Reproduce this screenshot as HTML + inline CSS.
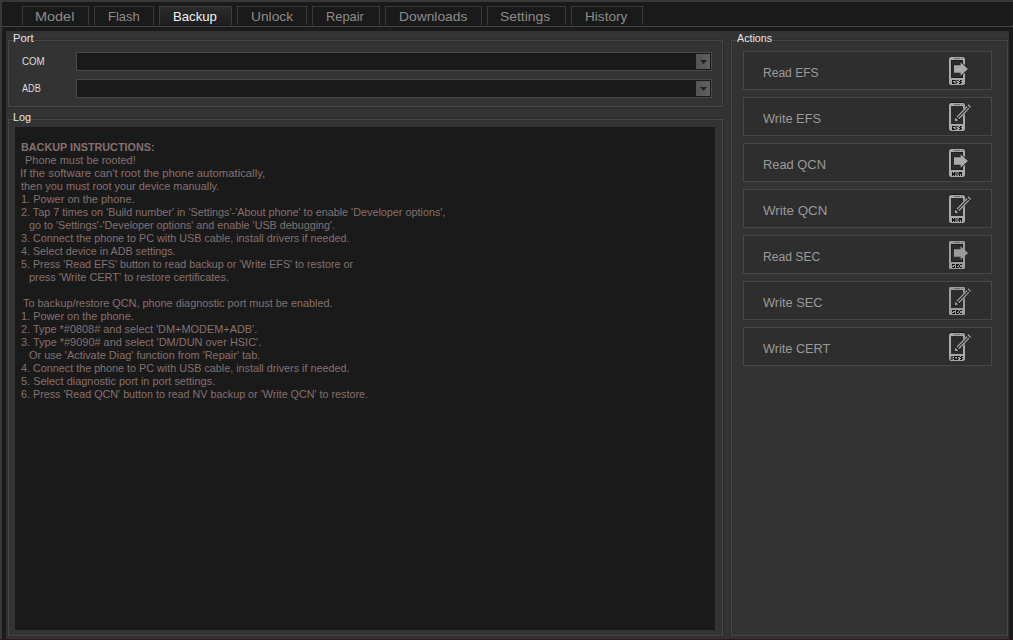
<!DOCTYPE html>
<html><head><meta charset="utf-8">
<style>
*{margin:0;padding:0;box-sizing:border-box}
html,body{width:1013px;height:640px;overflow:hidden;background:#1a1a1a;font-family:"Liberation Sans",sans-serif}
.a{position:absolute}
.tx{position:absolute;white-space:pre;transform-origin:0 0}
.tab{position:absolute;top:6px;height:19px;border:1px solid #3a3a3a;border-bottom:none}
.tab.sel{background:linear-gradient(#2b2b2b,#1d1d1d);border-color:#3e3e3e}
.tt{font-size:13px;line-height:15px;color:#8c8c8c}
.tt.sel{color:#f2f2f2}
.grp{position:absolute;border:1px solid #464646;box-shadow:0 0 0 1px #2e2e2e}
.gt{font-size:11px;line-height:13px;color:#e6e6e6}
.knock{position:absolute;background:#333333;height:3px}
.lbl{font-size:11px;line-height:13px;color:#dcdcdc}
.combo{position:absolute;left:76px;width:636px;height:19px;border:1px solid #4a4a4a;background:#1a1a1a}
.combo .in{position:absolute;left:0;top:0;right:0;bottom:0;border:1px solid #1a1a1a}
.combo .btn{position:absolute;left:619px;top:1px;width:14px;height:15px;background:linear-gradient(90deg,#545454,#606060)}
.combo svg{position:absolute;left:0;top:0}
.ll{font-size:11px;line-height:13px;color:#857070}
.ll.b{font-weight:bold}
.ab{position:absolute;left:743px;width:249px;height:39px;border:1px solid #474747;background:#2e2e2e}
.abt{font-size:12px;line-height:14px;color:#9a9a9a}
.ab svg{position:absolute;left:205px;top:4px}
</style></head><body>
<div class="a" style="left:0;top:0;width:1013px;height:2px;background:#383838"></div>
<div class="a" style="left:0;top:0;width:2px;height:640px;background:#383838"></div>
<div class="tab" style="left:22px;width:67px"></div>
<div class="tab" style="left:94px;width:60px"></div>
<div class="tab sel" style="left:159px;width:73px"></div>
<div class="tab" style="left:237px;width:70px"></div>
<div class="tab" style="left:312px;width:68px"></div>
<div class="tab" style="left:385px;width:97px"></div>
<div class="tab" style="left:487px;width:79px"></div>
<div class="tab" style="left:571px;width:72px"></div>
<div class="tx tt" style="left:35.30px;top:9.00px;transform:scaleX(1.1114);">Model</div>
<div class="tx tt" style="left:107.61px;top:9.00px;transform:scaleX(0.9948);">Flash</div>
<div class="tx tt sel" style="left:173.49px;top:9.00px;transform:scaleX(1.0135);">Backup</div>
<div class="tx tt" style="left:251.44px;top:9.00px;transform:scaleX(1.0577);">Unlock</div>
<div class="tx tt" style="left:325.51px;top:9.00px;transform:scaleX(0.9877);">Repair</div>
<div class="tx tt" style="left:398.63px;top:9.00px;transform:scaleX(1.0629);">Downloads</div>
<div class="tx tt" style="left:500.06px;top:9.00px;transform:scaleX(1.0661);">Settings</div>
<div class="tx tt" style="left:584.55px;top:9.00px;transform:scaleX(1.0464);">History</div>
<div class="a" style="left:2px;top:26px;width:1011px;height:1px;background:#444444"></div>
<div class="a" style="left:6px;top:31px;width:1003px;height:608px;background:#333333"></div>
<div class="grp" style="left:8px;top:40px;width:715px;height:67px"></div>
<div class="grp" style="left:8px;top:119px;width:715px;height:517px"></div>
<div class="grp" style="left:731px;top:40px;width:277px;height:596px"></div>
<div class="knock" style="left:14px;top:39px;width:20px"></div>
<div class="knock" style="left:14px;top:118px;width:17px"></div>
<div class="knock" style="left:737px;top:39px;width:35px"></div>
<div class="tx gt" style="left:12.70px;top:31.69px;transform:scaleX(1.0169);">Port</div>
<div class="tx gt" style="left:12.60px;top:110.69px;transform:scaleX(0.9856);">Log</div>
<div class="tx gt" style="left:736.90px;top:31.69px;transform:scaleX(0.9747);">Actions</div>
<div class="tx lbl" style="left:21.85px;top:54.69px;transform:scaleX(0.8824);">COM</div>
<div class="tx lbl" style="left:21.86px;top:81.69px;transform:scaleX(0.8313);">ADB</div>
<div class="combo" style="top:52px"><div class="in"></div><div class="btn"><svg width="14" height="15"><polygon points="4,6 11,6 7.5,10" fill="#222"/></svg></div></div>
<div class="combo" style="top:79px"><div class="in"></div><div class="btn"><svg width="14" height="15"><polygon points="4,6 11,6 7.5,10" fill="#222"/></svg></div></div>
<div class="a" style="left:15px;top:127px;width:700px;height:503px;background:#1a1a1a"></div>
<div class="tx ll b" style="left:21.49px;top:140.69px;transform:scaleX(0.9809);">BACKUP INSTRUCTIONS:</div>
<div class="tx ll" style="left:25.18px;top:153.69px;transform:scaleX(0.9947);">Phone must be rooted!</div>
<div class="tx ll" style="left:19.97px;top:166.69px;transform:scaleX(1.0275);">If the software can't root the phone automatically,</div>
<div class="tx ll" style="left:20.50px;top:179.69px;transform:scaleX(0.9926);">then you must root your device manually.</div>
<div class="tx ll" style="left:21.49px;top:192.69px;transform:scaleX(0.9985);">1. Power on the phone.</div>
<div class="tx ll" style="left:20.50px;top:205.69px;transform:scaleX(0.9828);">2. Tap 7 times on 'Build number' in 'Settings'-'About phone' to enable 'Developer options',</div>
<div class="tx ll" style="left:28.70px;top:218.69px;transform:scaleX(0.9783);">go to 'Settings'-'Developer options' and enable 'USB debugging'.</div>
<div class="tx ll" style="left:20.50px;top:231.69px;transform:scaleX(0.9803);">3. Connect the phone to PC with USB cable, install drivers if needed.</div>
<div class="tx ll" style="left:20.50px;top:244.69px;transform:scaleX(0.9761);">4. Select device in ADB settings.</div>
<div class="tx ll" style="left:20.50px;top:257.69px;transform:scaleX(0.9759);">5. Press 'Read EFS' button to read backup or 'Write EFS' to restore or</div>
<div class="tx ll" style="left:28.69px;top:270.69px;transform:scaleX(0.9968);">press 'Write CERT' to restore certificates.</div>
<div class="tx ll" style="left:23.40px;top:296.69px;transform:scaleX(0.9869);">To backup/restore QCN, phone diagnostic port must be enabled.</div>
<div class="tx ll" style="left:21.49px;top:309.69px;transform:scaleX(0.9915);">1. Power on the phone.</div>
<div class="tx ll" style="left:20.50px;top:322.69px;transform:scaleX(0.9916);">2. Type *#0808# and select 'DM+MODEM+ADB'.</div>
<div class="tx ll" style="left:21.49px;top:335.69px;transform:scaleX(0.9957);">3. Type *#9090# and select 'DM/DUN over HSIC'.</div>
<div class="tx ll" style="left:29.40px;top:348.69px;transform:scaleX(0.9935);">Or use 'Activate Diag' function from 'Repair' tab.</div>
<div class="tx ll" style="left:20.50px;top:361.69px;transform:scaleX(0.9802);">4. Connect the phone to PC with USB cable, install drivers if needed.</div>
<div class="tx ll" style="left:21.49px;top:374.69px;transform:scaleX(0.9955);">5. Select diagnostic port in port settings.</div>
<div class="tx ll" style="left:20.50px;top:387.69px;transform:scaleX(0.9778);">6. Press 'Read QCN' button to read NV backup or 'Write QCN' to restore.</div>
<div class="ab" style="top:51px"><svg width="26" height="32" viewBox="0 -1 26 32" style="overflow:visible"><rect x="0" y="0" width="16" height="28" rx="2.5" fill="#a9a9a9"/><rect x="2" y="3" width="12" height="18" fill="#1e1e1e"/><rect x="3" y="4" width="10" height="16" fill="#2c2c2c"/><rect x="5" y="1" width="6" height="1" fill="#6a6a6a"/><rect x="12" y="1" width="2" height="1" fill="#7a7a7a"/><g fill="#151515" shape-rendering="auto"><rect x="3" y="23" width="1" height="1"/><rect x="4" y="23" width="1" height="1"/><rect x="5" y="23" width="1" height="1"/><rect x="3" y="24" width="1" height="1"/><rect x="3" y="25" width="1" height="1"/><rect x="4" y="25" width="1" height="1"/><rect x="3" y="26" width="1" height="1"/><rect x="4" y="26" width="1" height="1"/><rect x="5" y="26" width="1" height="1"/><rect x="6.5" y="23" width="1" height="1"/><rect x="7.5" y="23" width="1" height="1"/><rect x="8.5" y="23" width="1" height="1"/><rect x="6.5" y="24" width="1" height="1"/><rect x="6.5" y="25" width="1" height="1"/><rect x="7.5" y="25" width="1" height="1"/><rect x="6.5" y="26" width="1" height="1"/><rect x="11" y="23" width="1" height="1"/><rect x="12" y="23" width="1" height="1"/><rect x="10" y="24" width="1" height="1"/><rect x="11" y="24" width="1" height="1"/><rect x="11" y="25" width="1" height="1"/><rect x="12" y="25" width="1" height="1"/><rect x="10" y="26" width="1" height="1"/><rect x="11" y="26" width="1" height="1"/></g><polygon points="5,8.2 11.6,8.2 11.6,5.2 19,12 11.6,18.8 11.6,15.8 5,15.8" fill="#a9a9a9" stroke="#202020" stroke-width="1.4" paint-order="stroke" stroke-linejoin="miter"/></svg></div>
<div class="ab" style="top:97px"><svg width="26" height="32" viewBox="0 -1 26 32" style="overflow:visible"><rect x="1" y="-1" width="14" height="1" fill="#151515"/><rect x="0" y="0" width="16" height="28" rx="2.5" fill="#a9a9a9"/><rect x="2" y="3" width="12" height="18" fill="#2c2c2c"/><rect x="5" y="1" width="6" height="1" fill="#6a6a6a"/><rect x="12" y="1" width="2" height="1" fill="#7a7a7a"/><g fill="#151515" shape-rendering="auto"><rect x="3" y="23" width="1" height="1"/><rect x="4" y="23" width="1" height="1"/><rect x="5" y="23" width="1" height="1"/><rect x="3" y="24" width="1" height="1"/><rect x="3" y="25" width="1" height="1"/><rect x="4" y="25" width="1" height="1"/><rect x="3" y="26" width="1" height="1"/><rect x="4" y="26" width="1" height="1"/><rect x="5" y="26" width="1" height="1"/><rect x="6.5" y="23" width="1" height="1"/><rect x="7.5" y="23" width="1" height="1"/><rect x="8.5" y="23" width="1" height="1"/><rect x="6.5" y="24" width="1" height="1"/><rect x="6.5" y="25" width="1" height="1"/><rect x="7.5" y="25" width="1" height="1"/><rect x="6.5" y="26" width="1" height="1"/><rect x="11" y="23" width="1" height="1"/><rect x="12" y="23" width="1" height="1"/><rect x="10" y="24" width="1" height="1"/><rect x="11" y="24" width="1" height="1"/><rect x="11" y="25" width="1" height="1"/><rect x="12" y="25" width="1" height="1"/><rect x="10" y="26" width="1" height="1"/><rect x="11" y="26" width="1" height="1"/></g><g transform="translate(5.5,18.4) rotate(-46)"><rect x="3.2" y="-2.4" width="18.8" height="4.8" fill="#222" opacity="0.6"/><polygon points="0,0 3.6,-1.9 3.6,1.9" fill="#a9a9a9"/><rect x="-0.3" y="-0.6" width="1.2" height="1.2" fill="#151515"/><rect x="3.6" y="-2.3" width="1.2" height="4.6" fill="#121212"/><rect x="4.8" y="-1.9" width="14.8" height="3.8" fill="#a9a9a9"/><rect x="4.8" y="-0.55" width="14.8" height="1.1" fill="#202020"/><rect x="19.6" y="-2.1" width="1" height="4.2" fill="#161616"/><rect x="20.6" y="-1.9" width="1.3" height="3.8" fill="#a9a9a9"/></g></svg></div>
<div class="ab" style="top:143px"><svg width="26" height="32" viewBox="0 -1 26 32" style="overflow:visible"><rect x="0" y="0" width="16" height="28" rx="2.5" fill="#a9a9a9"/><rect x="2" y="3" width="12" height="18" fill="#1e1e1e"/><rect x="3" y="4" width="10" height="16" fill="#2c2c2c"/><rect x="5" y="1" width="6" height="1" fill="#6a6a6a"/><rect x="12" y="1" width="2" height="1" fill="#7a7a7a"/><g fill="#151515" shape-rendering="auto"><rect x="3" y="23" width="1" height="1"/><rect x="5" y="23" width="1" height="1"/><rect x="3" y="24" width="1" height="1"/><rect x="4" y="24" width="1" height="1"/><rect x="5" y="24" width="1" height="1"/><rect x="3" y="25" width="1" height="1"/><rect x="4" y="25" width="1" height="1"/><rect x="5" y="25" width="1" height="1"/><rect x="3" y="26" width="1" height="1"/><rect x="5" y="26" width="1" height="1"/><rect x="6.5" y="23" width="1" height="1"/><rect x="8.5" y="23" width="1" height="1"/><rect x="6.5" y="24" width="1" height="1"/><rect x="8.5" y="24" width="1" height="1"/><rect x="6.5" y="25" width="1" height="1"/><rect x="8.5" y="25" width="1" height="1"/><rect x="7.5" y="26" width="1" height="1"/><rect x="10" y="23" width="1" height="1"/><rect x="11" y="23" width="1" height="1"/><rect x="12" y="23" width="1" height="1"/><rect x="10" y="24" width="1" height="1"/><rect x="11" y="24" width="1" height="1"/><rect x="12" y="24" width="1" height="1"/><rect x="10" y="25" width="1" height="1"/><rect x="12" y="25" width="1" height="1"/><rect x="10" y="26" width="1" height="1"/><rect x="12" y="26" width="1" height="1"/></g><polygon points="5,8.2 11.6,8.2 11.6,5.2 19,12 11.6,18.8 11.6,15.8 5,15.8" fill="#a9a9a9" stroke="#202020" stroke-width="1.4" paint-order="stroke" stroke-linejoin="miter"/></svg></div>
<div class="ab" style="top:189px"><svg width="26" height="32" viewBox="0 -1 26 32" style="overflow:visible"><rect x="1" y="-1" width="14" height="1" fill="#151515"/><rect x="0" y="0" width="16" height="28" rx="2.5" fill="#a9a9a9"/><rect x="2" y="3" width="12" height="18" fill="#2c2c2c"/><rect x="5" y="1" width="6" height="1" fill="#6a6a6a"/><rect x="12" y="1" width="2" height="1" fill="#7a7a7a"/><g fill="#151515" shape-rendering="auto"><rect x="3" y="23" width="1" height="1"/><rect x="5" y="23" width="1" height="1"/><rect x="3" y="24" width="1" height="1"/><rect x="4" y="24" width="1" height="1"/><rect x="5" y="24" width="1" height="1"/><rect x="3" y="25" width="1" height="1"/><rect x="4" y="25" width="1" height="1"/><rect x="5" y="25" width="1" height="1"/><rect x="3" y="26" width="1" height="1"/><rect x="5" y="26" width="1" height="1"/><rect x="6.5" y="23" width="1" height="1"/><rect x="8.5" y="23" width="1" height="1"/><rect x="6.5" y="24" width="1" height="1"/><rect x="8.5" y="24" width="1" height="1"/><rect x="6.5" y="25" width="1" height="1"/><rect x="8.5" y="25" width="1" height="1"/><rect x="7.5" y="26" width="1" height="1"/><rect x="10" y="23" width="1" height="1"/><rect x="11" y="23" width="1" height="1"/><rect x="12" y="23" width="1" height="1"/><rect x="10" y="24" width="1" height="1"/><rect x="11" y="24" width="1" height="1"/><rect x="12" y="24" width="1" height="1"/><rect x="10" y="25" width="1" height="1"/><rect x="12" y="25" width="1" height="1"/><rect x="10" y="26" width="1" height="1"/><rect x="12" y="26" width="1" height="1"/></g><g transform="translate(5.5,18.4) rotate(-46)"><rect x="3.2" y="-2.4" width="18.8" height="4.8" fill="#222" opacity="0.6"/><polygon points="0,0 3.6,-1.9 3.6,1.9" fill="#a9a9a9"/><rect x="-0.3" y="-0.6" width="1.2" height="1.2" fill="#151515"/><rect x="3.6" y="-2.3" width="1.2" height="4.6" fill="#121212"/><rect x="4.8" y="-1.9" width="14.8" height="3.8" fill="#a9a9a9"/><rect x="4.8" y="-0.55" width="14.8" height="1.1" fill="#202020"/><rect x="19.6" y="-2.1" width="1" height="4.2" fill="#161616"/><rect x="20.6" y="-1.9" width="1.3" height="3.8" fill="#a9a9a9"/></g></svg></div>
<div class="ab" style="top:235px"><svg width="26" height="32" viewBox="0 -1 26 32" style="overflow:visible"><rect x="0" y="0" width="16" height="28" rx="1.2" fill="#9c9c9c"/><rect x="2" y="3" width="12" height="18" fill="#1e1e1e"/><rect x="3" y="4" width="10" height="16" fill="#2c2c2c"/><rect x="5" y="1" width="6" height="1" fill="#6a6a6a"/><rect x="12" y="1" width="2" height="1" fill="#7a7a7a"/><g fill="#151515" shape-rendering="auto"><rect x="3" y="23" width="1" height="1"/><rect x="4" y="23" width="1" height="1"/><rect x="5" y="23" width="1" height="1"/><rect x="3" y="24" width="1" height="1"/><rect x="5" y="25" width="1" height="1"/><rect x="3" y="26" width="1" height="1"/><rect x="4" y="26" width="1" height="1"/><rect x="5" y="26" width="1" height="1"/><rect x="7" y="23" width="1" height="1"/><rect x="8" y="23" width="1" height="1"/><rect x="9" y="23" width="1" height="1"/><rect x="7" y="24" width="1" height="1"/><rect x="8" y="24" width="1" height="1"/><rect x="7" y="25" width="1" height="1"/><rect x="7" y="26" width="1" height="1"/><rect x="8" y="26" width="1" height="1"/><rect x="9" y="26" width="1" height="1"/><rect x="11" y="23" width="1" height="1"/><rect x="12" y="23" width="1" height="1"/><rect x="10" y="24" width="1" height="1"/><rect x="10" y="25" width="1" height="1"/><rect x="11" y="26" width="1" height="1"/><rect x="12" y="26" width="1" height="1"/></g><polygon points="5,8.2 11.6,8.2 11.6,5.2 19,12 11.6,18.8 11.6,15.8 5,15.8" fill="#9c9c9c" stroke="#202020" stroke-width="0.01" paint-order="stroke" stroke-linejoin="miter"/></svg></div>
<div class="ab" style="top:281px"><svg width="26" height="32" viewBox="0 -1 26 32" style="overflow:visible"><rect x="0" y="0" width="16" height="28" rx="1.2" fill="#9c9c9c"/><rect x="2" y="3" width="12" height="18" fill="#2c2c2c"/><rect x="5" y="1" width="6" height="1" fill="#6a6a6a"/><rect x="12" y="1" width="2" height="1" fill="#7a7a7a"/><g fill="#151515" shape-rendering="auto"><rect x="3" y="23" width="1" height="1"/><rect x="4" y="23" width="1" height="1"/><rect x="5" y="23" width="1" height="1"/><rect x="3" y="24" width="1" height="1"/><rect x="5" y="25" width="1" height="1"/><rect x="3" y="26" width="1" height="1"/><rect x="4" y="26" width="1" height="1"/><rect x="5" y="26" width="1" height="1"/><rect x="7" y="23" width="1" height="1"/><rect x="8" y="23" width="1" height="1"/><rect x="9" y="23" width="1" height="1"/><rect x="7" y="24" width="1" height="1"/><rect x="8" y="24" width="1" height="1"/><rect x="7" y="25" width="1" height="1"/><rect x="7" y="26" width="1" height="1"/><rect x="8" y="26" width="1" height="1"/><rect x="9" y="26" width="1" height="1"/><rect x="11" y="23" width="1" height="1"/><rect x="12" y="23" width="1" height="1"/><rect x="10" y="24" width="1" height="1"/><rect x="10" y="25" width="1" height="1"/><rect x="11" y="26" width="1" height="1"/><rect x="12" y="26" width="1" height="1"/></g><g transform="translate(5.5,18.4) rotate(-46)"><rect x="3.2" y="-2.4" width="18.8" height="4.8" fill="#222" opacity="0.6"/><polygon points="0,0 3.6,-1.9 3.6,1.9" fill="#9c9c9c"/><rect x="-0.3" y="-0.6" width="1.2" height="1.2" fill="#151515"/><rect x="3.6" y="-2.3" width="1.2" height="4.6" fill="#121212"/><rect x="4.8" y="-1.9" width="14.8" height="3.8" fill="#9c9c9c"/><rect x="4.8" y="-0.55" width="14.8" height="1.1" fill="#202020"/><rect x="19.6" y="-2.1" width="1" height="4.2" fill="#161616"/><rect x="20.6" y="-1.9" width="1.3" height="3.8" fill="#9c9c9c"/></g></svg></div>
<div class="ab" style="top:327px"><svg width="26" height="32" viewBox="0 -1 26 32" style="overflow:visible"><rect x="1" y="-1" width="14" height="1" fill="#151515"/><rect x="0" y="0" width="16" height="28" rx="2.5" fill="#a9a9a9"/><rect x="2" y="3" width="12" height="18" fill="#2c2c2c"/><rect x="5" y="1" width="6" height="1" fill="#6a6a6a"/><rect x="12" y="1" width="2" height="1" fill="#7a7a7a"/><g fill="#151515" shape-rendering="auto"><rect x="2.5" y="23" width="1" height="1"/><rect x="3.5" y="23" width="1" height="1"/><rect x="1.5" y="24" width="1" height="1"/><rect x="2.5" y="24" width="1" height="1"/><rect x="2.5" y="25" width="1" height="1"/><rect x="3.5" y="25" width="1" height="1"/><rect x="1.5" y="26" width="1" height="1"/><rect x="2.5" y="26" width="1" height="1"/><rect x="5" y="23" width="1" height="1"/><rect x="6" y="23" width="1" height="1"/><rect x="7" y="23" width="1" height="1"/><rect x="5" y="24" width="1" height="1"/><rect x="5" y="25" width="1" height="1"/><rect x="6" y="25" width="1" height="1"/><rect x="5" y="26" width="1" height="1"/><rect x="6" y="26" width="1" height="1"/><rect x="7" y="26" width="1" height="1"/><rect x="8" y="23" width="1" height="1"/><rect x="9" y="23" width="1" height="1"/><rect x="10" y="23" width="1" height="1"/><rect x="8" y="24" width="1" height="1"/><rect x="8" y="25" width="1" height="1"/><rect x="9" y="25" width="1" height="1"/><rect x="8" y="26" width="1" height="1"/><rect x="12" y="23" width="1" height="1"/><rect x="13" y="23" width="1" height="1"/><rect x="11" y="24" width="1" height="1"/><rect x="12" y="24" width="1" height="1"/><rect x="12" y="25" width="1" height="1"/><rect x="13" y="25" width="1" height="1"/><rect x="11" y="26" width="1" height="1"/><rect x="12" y="26" width="1" height="1"/></g><g transform="translate(5.5,18.4) rotate(-46)"><rect x="3.2" y="-2.4" width="18.8" height="4.8" fill="#222" opacity="0.6"/><polygon points="0,0 3.6,-1.9 3.6,1.9" fill="#a9a9a9"/><rect x="-0.3" y="-0.6" width="1.2" height="1.2" fill="#151515"/><rect x="3.6" y="-2.3" width="1.2" height="4.6" fill="#121212"/><rect x="4.8" y="-1.9" width="14.8" height="3.8" fill="#a9a9a9"/><rect x="4.8" y="-0.55" width="14.8" height="1.1" fill="#202020"/><rect x="19.6" y="-2.1" width="1" height="4.2" fill="#161616"/><rect x="20.6" y="-1.9" width="1.3" height="3.8" fill="#a9a9a9"/></g></svg></div>
<div class="tx abt" style="left:763.47px;top:65.84px;transform:scaleX(1.0035);">Read EFS</div>
<div class="tx abt" style="left:763.10px;top:111.84px;transform:scaleX(1.0644);">Write EFS</div>
<div class="tx abt" style="left:763.47px;top:157.84px;transform:scaleX(1.0727);">Read QCN</div>
<div class="tx abt" style="left:763.10px;top:203.84px;transform:scaleX(1.1136);">Write QCN</div>
<div class="tx abt" style="left:763.45px;top:249.84px;transform:scaleX(1.0097);">Read SEC</div>
<div class="tx abt" style="left:763.10px;top:295.84px;transform:scaleX(1.0679);">Write SEC</div>
<div class="tx abt" style="left:763.10px;top:341.84px;transform:scaleX(1.0576);">Write CERT</div>
<div class="a" style="left:1012px;top:25px;width:1px;height:1px;background:#444"></div>
<div class="a" style="left:0;top:639px;width:1013px;height:1px;background:#2b191d"></div>
</body></html>
